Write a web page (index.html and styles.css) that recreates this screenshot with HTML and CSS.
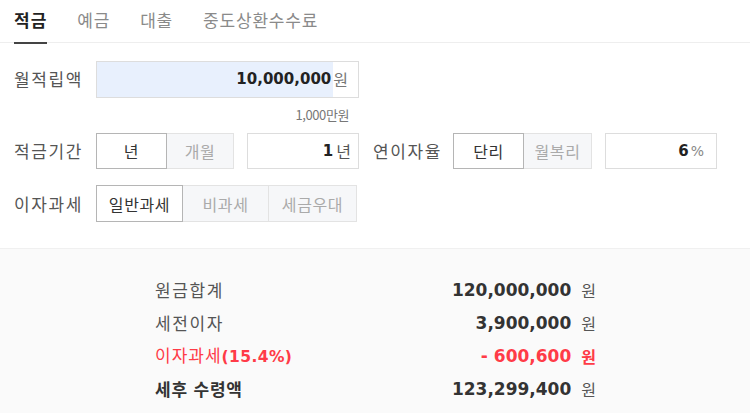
FILE: index.html
```html
<!DOCTYPE html>
<html lang="ko">
<head>
<meta charset="utf-8">
<link rel="stylesheet" href="styles.css">
</head>
<body>
<div class="tabs">
  <div class="tab active">적금</div>
  <div class="tab">예금</div>
  <div class="tab">대출</div>
  <div class="tab">중도상환수수료</div>
</div>
<div class="form">
  <div class="row">
    <div class="label">월적립액</div>
    <div class="box wide">
      <div class="field blue"><span class="num">10,000,000</span></div>
      <span class="unit">원</span>
    </div>
  </div>
  <div class="hint">1,000만원</div>
  <div class="row">
    <div class="label">적금기간</div>
    <div class="toggle">
      <div class="opt on w71">년</div>
      <div class="opt w67">개월</div>
    </div>
    <div class="box small">
      <div class="field"><span class="num">1</span></div>
      <span class="unit tight">년</span>
    </div>
    <div class="label second">연이자율</div>
    <div class="toggle">
      <div class="opt on w71">단리</div>
      <div class="opt w68">월복리</div>
    </div>
    <div class="box small">
      <div class="field"><span class="num">6</span></div>
      <span class="unit tight pct">%</span>
    </div>
  </div>
  <div class="row row3">
    <div class="label">이자과세</div>
    <div class="toggle">
      <div class="opt on w87">일반과세</div>
      <div class="opt w86">비과세</div>
      <div class="opt w88">세금우대</div>
    </div>
  </div>
</div>
<div class="result">
  <div class="res-row">
    <div class="res-label">원금합계</div>
    <div class="res-val">120,000,000</div>
    <div class="res-unit">원</div>
  </div>
  <div class="res-row">
    <div class="res-label">세전이자</div>
    <div class="res-val">3,900,000</div>
    <div class="res-unit">원</div>
  </div>
  <div class="res-row red">
    <div class="res-label">이자과세<span class="rate">(15.4%)</span></div>
    <div class="res-val">- 600,600</div>
    <div class="res-unit unit-red">원</div>
  </div>
  <div class="res-row total">
    <div class="res-label">세후 수령액</div>
    <div class="res-val">123,299,400</div>
    <div class="res-unit">원</div>
  </div>
</div>
</body>
</html>
```
FILE: styles.css
```css
html, body {
  margin: 0;
  padding: 0;
  background: #ffffff;
  font-family: "Noto Sans CJK KR", "Noto Sans", sans-serif;
  color: #333;
  overflow: hidden;
}
.tabs {
  display: flex;
  gap: 30px;
  padding-left: 14px;
  height: 42px;
  border-bottom: 1px solid #eeeeee;
}
.tab {
  font-size: 17px;
  line-height: 40px;
  height: 41px;
  color: #8a8a8a;
  letter-spacing: 0.8px;
  box-sizing: border-box;
}
.tab.active {
  color: #222;
  font-weight: bold;
  border-bottom: 2px solid #444;
  height: 44px;
  letter-spacing: 1px;
}
.form {
  padding: 18px 0 26px 14px;
}
.row {
  display: flex;
  align-items: center;
  height: 36px;
}
.row3 {
  margin-top: 16px;
  height: 37px;
}
.label {
  width: 82px;
  flex: none;
  font-size: 17px;
  letter-spacing: 1.6px;
  color: #555;
  line-height: 20px;
  white-space: nowrap;
}
.label.second {
  width: 80px;
  margin-left: 14px;
}
.box {
  display: flex;
  align-items: center;
  box-sizing: border-box;
  border: 1px solid #dddddd;
  background: #fff;
  height: 36px;
}
.box.wide {
  width: 263px;
  height: 37px;
}
.box.small {
  width: 112px;
  margin-left: 13px;
}
.field {
  flex: 1;
  height: 100%;
  display: flex;
  align-items: center;
  justify-content: flex-end;
  padding-right: 2px;
}
.field.blue {
  background: #e8f0fd;
}
.num {
  font-family: "DejaVu Sans", sans-serif;
  font-weight: bold;
  font-size: 15px;
  color: #222;
}
.unit {
  font-size: 16px;
  color: #777;
  padding: 0 10px 0 0;
  line-height: 20px;
}
.unit.tight {
  padding: 0 7px 0 1px;
  color: #555;
}
.unit.pct {
  font-family: "DejaVu Sans", sans-serif;
  font-size: 14px;
  color: #888;
  padding: 0 12px 0 0;
}
.hint {
  width: 263px;
  margin-left: 82px;
  box-sizing: border-box;
  padding-right: 10px;
  text-align: right;
  font-size: 13px;
  letter-spacing: -0.4px;
  color: #777;
  height: 36px;
  line-height: 36px;
}
.toggle {
  display: flex;
  height: 100%;
}
.opt {
  box-sizing: border-box;
  height: 100%;
  display: flex;
  align-items: center;
  justify-content: center;
  font-size: 16px;
  color: #aaa;
  background: #f6f7f9;
  border: 1px solid #e3e3e3;
  border-left: none;
  letter-spacing: 0.6px;
}
.opt.on {
  background: #fff;
  color: #333;
  border: 1px solid #b5b5b5;
}
.w67 { width: 67px; }
.w68 { width: 68px; }
.w71 { width: 71px; }
.w87 { width: 87px; }
.w86 { width: 86px; }
.w88 { width: 88px; }
.result {
  background: #fafafa;
  border-top: 1px solid #f0f0f0;
  padding: 24px 0 0 155px;
  height: 165px;
  box-sizing: border-box;
}
.res-row {
  display: flex;
  align-items: center;
  width: 441px;
  height: 33px;
}
.res-label {
  font-size: 17px;
  letter-spacing: 1.6px;
  color: #555;
  line-height: 20px;
}
.res-val {
  flex: 1;
  text-align: right;
  font-family: "DejaVu Sans", sans-serif;
  font-weight: bold;
  font-size: 17px;
  color: #333;
}
.res-unit {
  margin-left: 10px;
  font-size: 16px;
  color: #555;
  line-height: 20px;
}
.res-row.red .res-label,
.res-row.red .res-val {
  color: #ff3b47;
}
.res-row .res-unit.unit-red {
  color: #ff3b47;
  font-weight: bold;
}
.res-row.red .res-label {
  letter-spacing: 1px;
}
.rate {
  font-family: "DejaVu Sans", sans-serif;
  font-weight: bold;
  font-size: 15.5px;
  letter-spacing: 0.4px;
}
.res-row.total .res-label {
  font-weight: bold;
  color: #333;
  letter-spacing: 0.8px;
}
```
